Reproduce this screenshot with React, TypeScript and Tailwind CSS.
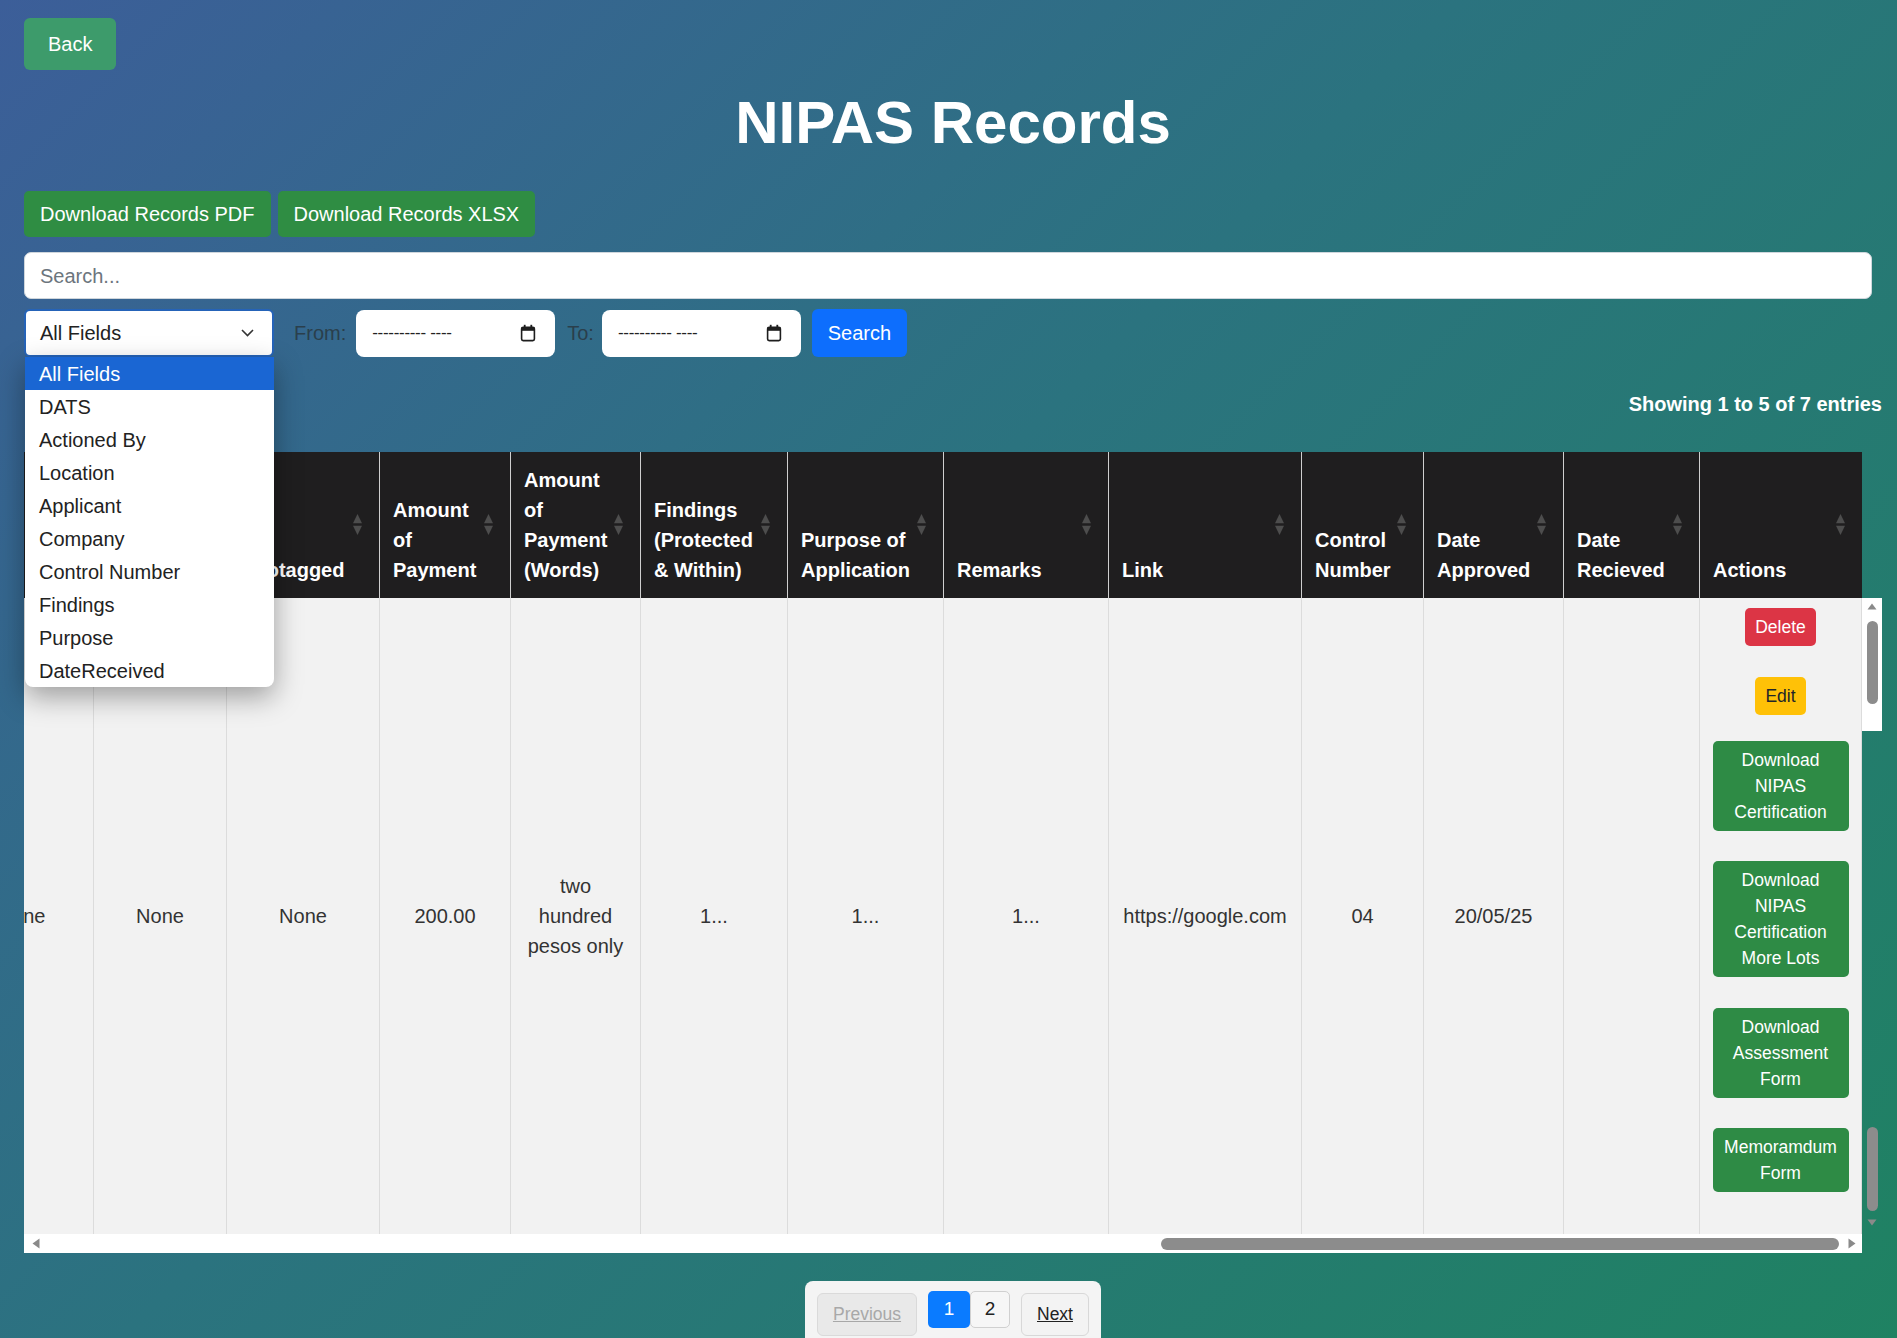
import React from "react";

const GRID =
  "grid grid-cols-[144px_133px_153px_131px_130px_147px_156px_165px_193px_122px_140px_136px_162px]";

function SortIcon() {
  return (
    <svg width="11" height="23" viewBox="0 0 11 23">
      <path d="M5.5 1 L10 10.2 L1 10.2 Z" fill="#4d4d4d" />
      <path d="M5.5 22 L10 12.8 L1 12.8 Z" fill="#4d4d4d" />
    </svg>
  );
}

function CalendarIcon() {
  return (
    <svg width="16" height="18" viewBox="0 0 16 18">
      <rect x="1.6" y="3.2" width="12.8" height="13.4" rx="1.6" fill="none" stroke="#1e1e1e" strokeWidth="1.6" />
      <rect x="1.6" y="3.2" width="12.8" height="3.6" fill="#1e1e1e" />
      <rect x="3.8" y="0.8" width="1.8" height="3" fill="#1e1e1e" />
      <rect x="10.4" y="0.8" width="1.8" height="3" fill="#1e1e1e" />
    </svg>
  );
}

function HeaderCell({ lines, last }: { lines: string[]; last?: boolean }) {
  return (
    <div
      className={
        last
          ? "relative flex items-end pl-[13px] pr-[34px] pb-[13px]"
          : "relative flex items-end border-r border-[#cfcfcf] pl-[13px] pr-[34px] pb-[13px]"
      }
    >
      <span className="font-bold text-white text-[20px] leading-[30px] whitespace-nowrap">
        {lines.map((l, i) => (
          <React.Fragment key={i}>
            {i > 0 && <br />}
            {l}
          </React.Fragment>
        ))}
      </span>
      <div className="absolute right-[16px] top-[61px]">
        <SortIcon />
      </div>
    </div>
  );
}

function BodyCell({ children }: { children?: React.ReactNode }) {
  return (
    <div className="flex items-center justify-center text-center border-r border-[#dcdcdc] px-[8px] text-[20px] leading-[30px] text-[#333333]">
      {children}
    </div>
  );
}

const greenBtn =
  "w-[136px] rounded-[5px] bg-[#2e8b45] py-[6px] text-center text-[17.5px] leading-[26px] text-white";

export default function App() {
  const headers: string[][] = [
    [],
    ["Applicant"],
    ["Geotagged"],
    ["Amount", "of", "Payment"],
    ["Amount", "of", "Payment", "(Words)"],
    ["Findings", "(Protected", "& Within)"],
    ["Purpose of", "Application"],
    ["Remarks"],
    ["Link"],
    ["Control", "Number"],
    ["Date", "Approved"],
    ["Date", "Recieved"],
    ["Actions"],
  ];
  const options = [
    "All Fields",
    "DATS",
    "Actioned By",
    "Location",
    "Applicant",
    "Company",
    "Control Number",
    "Findings",
    "Purpose",
    "DateReceived",
  ];

  return (
    <div className="min-h-screen w-full bg-[linear-gradient(135deg,#3c5e99_0%,#2b737f_45%,#1f8262_100%)] pl-[24px] pr-[15px] pt-[18px] font-['Liberation_Sans',Arial,sans-serif] overflow-hidden">
      {/* Back */}
      <div className="flex">
        <button className="h-[52px] rounded-[6px] bg-[#3d9b6b] px-[24px] text-[20px] text-white">Back</button>
      </div>

      {/* Title */}
      <h1 className="mt-[17px] text-center text-[60px] font-bold leading-[72px] text-white">NIPAS Records</h1>

      {/* Download buttons */}
      <div className="mt-[32px] flex gap-[7px]">
        <button className="h-[46px] rounded-[5px] bg-[#2f8d43] px-[16px] text-[20px] text-white">
          Download Records PDF
        </button>
        <button className="h-[46px] rounded-[5px] bg-[#2f8d43] px-[16px] text-[20px] text-white">
          Download Records XLSX
        </button>
      </div>

      {/* Search input */}
      <div className="mt-[15px] mr-[10px] flex h-[47px] items-center rounded-[7px] border border-[#cfd6dc] bg-white pl-[15px] text-[20px] text-[#6c757d]">
        Search...
      </div>

      {/* Filter row */}
      <div className="relative z-20 mt-[10px] flex h-[48px] items-center">
        <div className="relative h-[48px] w-[250px]">
          <div className="flex h-full items-center justify-between rounded-[6px] border-2 border-[#2563b8] bg-white pl-[14px] pr-[18px] text-[20px] text-[#222]">
            <span>All Fields</span>
            <svg width="13" height="8" viewBox="0 0 13 8">
              <path d="M1 1 L6.5 6.5 L12 1" fill="none" stroke="#333" strokeWidth="1.6" />
            </svg>
          </div>
          <div className="absolute left-[1px] top-[48px] w-[249px] overflow-hidden rounded-b-[8px] bg-white shadow-[0_10px_28px_rgba(0,0,0,0.35)]">
            {options.map((o, i) => (
              <div
                key={o}
                className={
                  i === 0
                    ? "flex h-[33px] items-center bg-[#1a66d3] pl-[14px] text-[20px] text-white"
                    : "flex h-[33px] items-center pl-[14px] text-[20px] text-[#222]"
                }
              >
                {o}
              </div>
            ))}
          </div>
        </div>
        <span className="ml-[20px] text-[20px] text-[#2a3f4c]">From:</span>
        <div className="ml-[10px] flex h-[47px] w-[199px] items-center justify-between rounded-[8px] bg-white pl-[16px] pr-[19px] text-[17px] text-[#222]">
          <span className="tracking-[-0.3px]">---------- ----</span>
          <CalendarIcon />
        </div>
        <span className="ml-[12px] text-[20px] text-[#2a3f4c]">To:</span>
        <div className="ml-[8px] flex h-[47px] w-[199px] items-center justify-between rounded-[8px] bg-white pl-[16px] pr-[19px] text-[17px] text-[#222]">
          <span className="tracking-[-0.3px]">---------- ----</span>
          <CalendarIcon />
        </div>
        <button className="ml-[11px] h-[48px] w-[95px] rounded-[6px] bg-[#0d6efd] text-[20px] text-white">Search</button>
      </div>

      {/* Showing */}
      <div className="mt-[36px] text-right text-[20px] font-bold leading-[22px] text-white">
        Showing 1 to 5 of 7 entries
      </div>

      {/* Table */}
      <div className="mt-[37px] w-[1858px]">
        {/* header */}
        <div className="h-[146px] w-[1838px] overflow-hidden bg-[#1f1e1f]">
          <div className={GRID + " ml-[-74px] h-[146px]"}>
            {headers.map((h, i) => (
              <HeaderCell key={i} lines={h} last={i === headers.length - 1} />
            ))}
          </div>
        </div>
        {/* body + vertical scrollbar */}
        <div className="flex">
          <div className="h-[636px] w-[1838px] overflow-hidden bg-[#f2f2f2]">
            <div className={GRID + " ml-[-74px] h-[636px]"}>
              <BodyCell>None</BodyCell>
              <BodyCell>None</BodyCell>
              <BodyCell>None</BodyCell>
              <BodyCell>200.00</BodyCell>
              <BodyCell>
                two
                <br />
                hundred
                <br />
                pesos only
              </BodyCell>
              <BodyCell>1...</BodyCell>
              <BodyCell>1...</BodyCell>
              <BodyCell>1...</BodyCell>
              <BodyCell>https://google.com</BodyCell>
              <BodyCell>04</BodyCell>
              <BodyCell>20/05/25</BodyCell>
              <BodyCell />
              <div className="flex flex-col items-center border-r border-[#dcdcdc] pt-[10px]">
                <button className="h-[38px] rounded-[5px] bg-[#dc3545] px-[10px] text-[17.5px] leading-[26px] text-white">
                  Delete
                </button>
                <button className="mt-[31px] h-[38px] rounded-[5px] bg-[#ffc107] px-[10px] text-[17.5px] leading-[26px] text-[#212529]">
                  Edit
                </button>
                <button className={"mt-[26px] " + greenBtn}>
                  Download
                  <br />
                  NIPAS
                  <br />
                  Certification
                </button>
                <button className={"mt-[30px] " + greenBtn}>
                  Download
                  <br />
                  NIPAS
                  <br />
                  Certification
                  <br />
                  More Lots
                </button>
                <button className={"mt-[31px] " + greenBtn}>
                  Download
                  <br />
                  Assessment
                  <br />
                  Form
                </button>
                <button className={"mt-[30px] " + greenBtn}>
                  Memoramdum
                  <br />
                  Form
                </button>
              </div>
            </div>
          </div>
          {/* vertical scrollbar */}
          <div className="flex h-[636px] w-[20px] flex-col items-center bg-[linear-gradient(to_bottom,#ffffff_0px,#ffffff_133px,transparent_133px)] pt-[5px]">
            <svg width="10" height="7" viewBox="0 0 10 7">
              <path d="M5 0.5 L9.5 6.5 L0.5 6.5 Z" fill="#8a8a8a" />
            </svg>
            <div className="mt-[11px] h-[83px] w-[11px] rounded-full bg-[#8c8c8c]" />
            <div className="mt-[423px] h-[84px] w-[11px] rounded-full bg-[#8c8c8c]" />
            <svg className="mt-[8px]" width="10" height="7" viewBox="0 0 10 7">
              <path d="M5 6.5 L9.5 0.5 L0.5 0.5 Z" fill="#8a8a8a" />
            </svg>
          </div>
        </div>
        {/* horizontal scrollbar */}
        <div className="flex h-[19px] w-[1838px] items-center bg-white">
          <svg className="ml-[8px]" width="8" height="11" viewBox="0 0 8 11">
            <path d="M0.5 5.5 L7.5 0.5 L7.5 10.5 Z" fill="#8a8a8a" />
          </svg>
          <div className="ml-[1121px] h-[12px] w-[678px] rounded-full bg-[#8c8c8c]" />
          <svg className="ml-[9px]" width="8" height="11" viewBox="0 0 8 11">
            <path d="M7.5 5.5 L0.5 0.5 L0.5 10.5 Z" fill="#8a8a8a" />
          </svg>
        </div>
      </div>

      {/* Pagination */}
      <div className="mt-[28px] flex justify-center">
        <div className="flex items-start rounded-t-[8px] bg-[#f4f4f4] px-[12px] pt-[10px] pb-[10px]">
          <button className="mt-[2px] h-[43px] w-[100px] rounded-[6px] border border-[#dadada] bg-[#e9e9e9] text-[17.5px] text-[#a8a8a8] underline">
            Previous
          </button>
          <button className="ml-[11px] h-[37px] w-[42px] rounded-[5px] bg-[#0a7bff] text-[19px] text-white">1</button>
          <button className="h-[37px] w-[40px] rounded-[5px] border border-[#d0d0d0] bg-[#f6f6f6] text-[19px] text-[#222]">
            2
          </button>
          <button className="ml-[11px] mt-[2px] h-[43px] w-[68px] rounded-[6px] border border-[#d8d8d8] bg-[#f3f3f3] text-[17.5px] text-[#222] underline">
            Next
          </button>
        </div>
      </div>
    </div>
  );
}
